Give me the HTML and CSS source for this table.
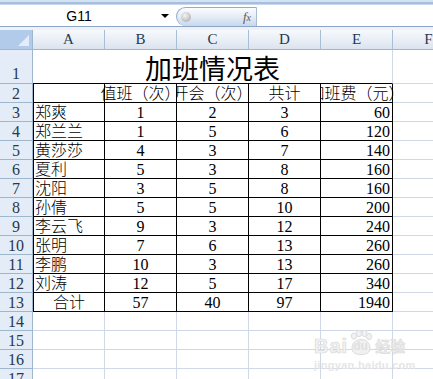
FILE: index.html
```html
<!DOCTYPE html>
<html lang="zh">
<head>
<meta charset="utf-8">
<title>加班情况表</title>
<link rel="stylesheet" href="styles.css">
</head>
<body>
<div class="app">
  <div class="ribbon-edge"></div>
  <div class="formula-bar">
    <div class="namebox"><span class="ref">G11</span><span class="arrow"></span></div>
    <div class="pill"><span class="knob"></span><span class="fx">f<span class="fx-x">x</span></span></div>
    <div class="input"></div>
  </div>
  <div class="gap"></div>
  <div class="sheet">
    <div class="corner"><span class="tri"></span></div>
    <div class="ch">A</div><div class="ch">B</div><div class="ch">C</div><div class="ch">D</div><div class="ch">E</div><div class="ch">F</div>

    <div class="rh rh1">1</div>
    <div class="title">加班情况表</div>
    <div class="c"></div>

    <div class="rh">2</div>
    <div class="c t first"></div>
    <div class="c t ctr clip-r"><span>值班（次）</span></div>
    <div class="c t ctr clip"><span>开会（次）</span></div>
    <div class="c t ctr"><span>共计</span></div>
    <div class="c t ctr clip-l"><span>加班费（元）</span></div>
    <div class="c"></div>

    <div class="rh">3</div>
    <div class="c t first l">郑爽</div><div class="c t ctr">1</div><div class="c t ctr">2</div><div class="c t ctr">3</div><div class="c t r">60</div><div class="c"></div>

    <div class="rh">4</div>
    <div class="c t first l">郑兰兰</div><div class="c t ctr">1</div><div class="c t ctr">5</div><div class="c t ctr">6</div><div class="c t r">120</div><div class="c"></div>

    <div class="rh">5</div>
    <div class="c t first l">黄莎莎</div><div class="c t ctr">4</div><div class="c t ctr">3</div><div class="c t ctr">7</div><div class="c t r">140</div><div class="c"></div>

    <div class="rh">6</div>
    <div class="c t first l">夏利</div><div class="c t ctr">5</div><div class="c t ctr">3</div><div class="c t ctr">8</div><div class="c t r">160</div><div class="c"></div>

    <div class="rh">7</div>
    <div class="c t first l">沈阳</div><div class="c t ctr">3</div><div class="c t ctr">5</div><div class="c t ctr">8</div><div class="c t r">160</div><div class="c"></div>

    <div class="rh">8</div>
    <div class="c t first l">孙倩</div><div class="c t ctr">5</div><div class="c t ctr">5</div><div class="c t ctr">10</div><div class="c t r">200</div><div class="c"></div>

    <div class="rh">9</div>
    <div class="c t first l">李云飞</div><div class="c t ctr">9</div><div class="c t ctr">3</div><div class="c t ctr">12</div><div class="c t r">240</div><div class="c"></div>

    <div class="rh">10</div>
    <div class="c t first l">张明</div><div class="c t ctr">7</div><div class="c t ctr">6</div><div class="c t ctr">13</div><div class="c t r">260</div><div class="c"></div>

    <div class="rh">11</div>
    <div class="c t first l">李鹏</div><div class="c t ctr">10</div><div class="c t ctr">3</div><div class="c t ctr">13</div><div class="c t r">260</div><div class="c"></div>

    <div class="rh">12</div>
    <div class="c t first l">刘涛</div><div class="c t ctr">12</div><div class="c t ctr">5</div><div class="c t ctr">17</div><div class="c t r">340</div><div class="c"></div>

    <div class="rh">13</div>
    <div class="c t first ctr">合计</div><div class="c t ctr">57</div><div class="c t ctr">40</div><div class="c t ctr">97</div><div class="c t r">1940</div><div class="c"></div>

    <div class="rh">14</div>
    <div class="c"></div><div class="c"></div><div class="c"></div><div class="c"></div><div class="c"></div><div class="c"></div>
    <div class="rh">15</div>
    <div class="c"></div><div class="c"></div><div class="c"></div><div class="c"></div><div class="c"></div><div class="c"></div>
    <div class="rh">16</div>
    <div class="c"></div><div class="c"></div><div class="c"></div><div class="c"></div><div class="c"></div><div class="c"></div>
    <div class="rh">17</div>
    <div class="c"></div><div class="c"></div><div class="c"></div><div class="c"></div><div class="c"></div><div class="c"></div>
  </div>

  <div class="watermark">
    <div class="wm-line1">
      <span class="wm-bai">Bai</span>
      <span class="wm-paw">
        <svg width="24" height="26" viewBox="0 0 24 26">
          <g fill="#f1f1f1" stroke="#dcdcdc" stroke-width="1">
            <ellipse cx="5" cy="6" rx="2.6" ry="3.2"/>
            <ellipse cx="10" cy="3.5" rx="2.6" ry="3.2"/>
            <ellipse cx="15.5" cy="3.5" rx="2.6" ry="3.2"/>
            <ellipse cx="20" cy="6.5" rx="2.6" ry="3.2"/>
            <path d="M3 18 C3 12 8 9.5 12 9.5 C16 9.5 21 12 21 18 C21 23 17 24.5 12 24.5 C7 24.5 3 23 3 18 Z"/>
          </g>
        </svg>
        <span class="wm-du">du</span>
      </span>
      <span class="wm-jy">经验</span>
    </div>
    <div class="wm-line2">jingyan.baidu.com</div>
  </div>
</div>
</body>
</html>
```

FILE: styles.css
```css
html, body {
  margin: 0;
  padding: 0;
  background: #ffffff;
}

.app {
  position: relative;
  width: 433px;
  height: 379px;
  overflow: hidden;
  background: #ffffff;
}

.ribbon-edge {
  height: 5px;
  box-sizing: border-box;
  border-top: 2px solid #d2e3f5;
  background: #a7bfdc;
  border-bottom: 1px solid #c6d7ec;
}

.formula-bar {
  display: flex;
  height: 22px;
  box-sizing: border-box;
  border-bottom: 1px solid #8ba6c6;
  background: #ffffff;
}

.namebox {
  width: 176px;
  display: flex;
  align-items: center;
  font-family: "Liberation Sans", Arial, sans-serif;
  font-size: 14px;
  color: #000;
}

.ref {
  width: 158px;
  text-align: center;
  padding-top: 1px;
}

.arrow {
  width: 0;
  height: 0;
  border-left: 4px solid transparent;
  border-right: 4px solid transparent;
  border-top: 4px solid #000;
  margin-left: 3px;
  margin-top: 1px;
}

.pill {
  width: 81px;
  margin-top: 2px;
  box-sizing: border-box;
  border: 1px solid #94acca;
  border-bottom: none;
  border-right: 1px solid #a6bad3;
  border-radius: 10px 0 0 10px / 10px 0 0 10px;
  background: linear-gradient(#fbfcfe 0%, #e6eef8 45%, #c7d7ec 100%);
  display: flex;
  align-items: center;
  justify-content: space-between;
  padding: 0 5px 0 4px;
}

.knob {
  width: 10px;
  height: 10px;
  border-radius: 50%;
  background: radial-gradient(circle at 40% 35%, #f4f4f4 0%, #c8c8c8 55%, #9c9c9c 100%);
  margin-bottom: 1px;
}

.fx {
  font-family: "Liberation Serif", "Times New Roman", serif;
  font-style: italic;
  font-size: 13px;
  color: #5a5a5a;
  line-height: 1;
  margin-bottom: 2px;
}

.fx-x {
  font-size: 10px;
}

.input {
  flex: 1;
  background: #ffffff;
}

.gap {
  height: 3px;
  background: #eef2f8;
}

.sheet {
  display: grid;
  grid-template-columns: 33px repeat(6, 72px);
  grid-template-rows: 20px 34px repeat(16, 19px);
  width: 433px;
  background: #ffffff;
  font-family: "Liberation Serif", "Noto Sans CJK SC", serif;
  font-size: 16px;
  font-weight: 300;
  color: #000;
}

.sheet > div {
  box-sizing: border-box;
  white-space: nowrap;
}

.corner {
  background: #b3cbea;
  border-right: 1px solid #9eb6ce;
  border-bottom: 1px solid #9eb6ce;
  position: relative;
}

.tri {
  position: absolute;
  right: 3px;
  bottom: 3px;
  width: 0;
  height: 0;
  border-left: 11px solid transparent;
  border-bottom: 11px solid #e3ecf7;
}

.ch {
  background: linear-gradient(#f7f9fc 0%, #eaeff6 50%, #dbe3ee 100%);
  border-right: 1px solid #a9bfd6;
  border-bottom: 1px solid #9eb6ce;
  text-align: center;
  line-height: 19px;
  font-family: "Liberation Serif", serif;
  font-size: 15px;
  color: #243a52;
}

.rh {
  background: #e4ecf7;
  border-right: 1px solid #9eb6ce;
  border-bottom: 1px solid #9eb6ce;
  text-align: center;
  line-height: 19px;
  font-family: "Liberation Serif", serif;
  font-size: 16px;
  color: #243a52;
}

.rh1 {
  line-height: 48px;
}

.c {
  border-right: 1px solid #d0d7e5;
  border-bottom: 1px solid #d0d7e5;
  line-height: 19px;
}

.title {
  grid-column: 2 / span 5;
  border-right: 1px solid #d0d7e5;
  border-bottom: 1px solid #000;
  display: flex;
  align-items: center;
  justify-content: center;
  font-family: "Noto Sans CJK SC", sans-serif;
  font-weight: 400;
  font-size: 27px;
  padding-top: 1px;
}

.t {
  border-right: 1px solid #000;
  border-bottom: 1px solid #000;
}

.first {
  border-left: 1px solid #000;
}

.l {
  padding-left: 1px;
}

.ctr {
  display: flex;
  justify-content: center;
}

.r {
  text-align: right;
  padding-right: 2px;
}

.clip {
  overflow: hidden;
}

.clip-r {
  clip-path: inset(0 0 0 -20px);
}

.clip-l {
  clip-path: inset(0 -20px 0 0);
}

.watermark {
  position: absolute;
  left: 314px;
  top: 326px;
  color: #e2e2e2;
  font-family: "Liberation Sans", Arial, sans-serif;
  font-weight: bold;
  pointer-events: none;
}

.wm-line1 {
  display: flex;
  align-items: flex-end;
  height: 30px;
}

.wm-bai {
  font-size: 20px;
  line-height: 20px;
  letter-spacing: 1px;
  -webkit-text-stroke: 0.6px #d6d6d6;
  color: #f2f2f2;
}

.wm-paw {
  position: relative;
  width: 24px;
  height: 26px;
  margin-left: 1px;
}

.wm-paw svg {
  display: block;
}

.wm-du {
  position: absolute;
  left: 4px;
  top: 10px;
  font-size: 12px;
  line-height: 12px;
  color: #e0e0e0;
}

.wm-jy {
  font-family: "Noto Sans CJK SC", sans-serif;
  font-size: 15px;
  line-height: 20px;
  color: #ececec;
  -webkit-text-stroke: 0.5px #d8d8d8;
  margin-left: 2px;
}

.wm-line2 {
  font-size: 11px;
  line-height: 14px;
  color: #e6e6e6;
  margin-top: 2px;
  letter-spacing: 0.3px;
}
```
